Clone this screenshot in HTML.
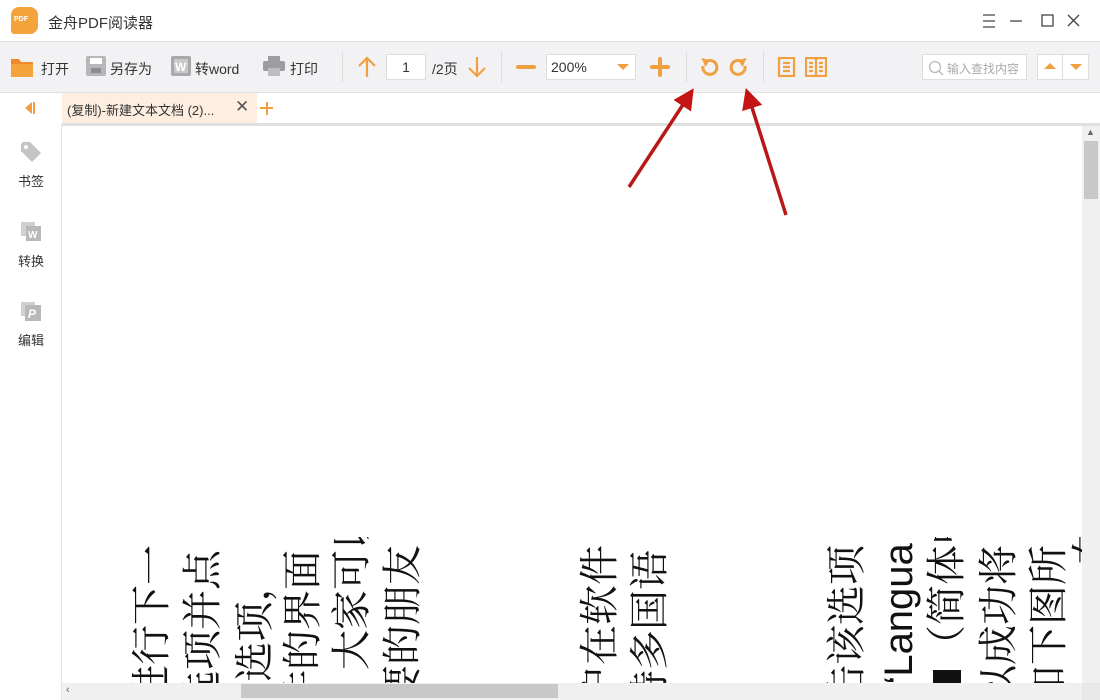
<!DOCTYPE html>
<html><head><meta charset="utf-8"><style>
*{margin:0;padding:0;box-sizing:border-box}
body{width:1100px;height:700px;overflow:hidden;background:#fff;font-family:"Liberation Sans","Noto Sans CJK SC",sans-serif;position:relative;color:#333}
.abs{position:absolute}
#title{left:0;top:0;width:1100px;height:42px;background:#fff;border-bottom:1px solid #e2e2e2}
#tb{left:0;top:42px;width:1100px;height:51px;background:#f2f2f4;border-bottom:1px solid #e0e0e0}
.t{position:absolute;font-size:14px;color:#333;top:17px}
.sep{position:absolute;top:10px;width:1px;height:30px;background:#dcdcdc}
#tabs{left:0;top:93px;width:1100px;height:31px;background:#fff}
#side{left:0;top:124px;width:62px;height:576px;background:#fff;border-right:1px solid #e4e4e4}
.sl{position:absolute;left:0;width:62px;text-align:center;font-size:13px;color:#333}
.col{position:absolute;top:700px;transform-origin:0 0;transform:rotate(-90deg);font-size:40px;line-height:38px;white-space:nowrap;color:#111;font-family:"Liberation Sans","Noto Serif CJK SC",serif}
</style></head><body>
<div id="title" class="abs">
 <div class="abs" style="left:11px;top:7px;width:27px;height:27px;background:#f5a33c;border-radius:8px 8px 8px 3px"></div>
 <div class="abs" style="left:14px;top:16px;font-size:7px;color:#fff;font-weight:bold">PDF</div>
 <div class="abs" style="left:48px;top:12px;font-size:15px;color:#333">金舟PDF阅读器</div>
 <svg class="abs" style="left:978px;top:12px" width="110" height="18" viewBox="0 0 110 18" fill="none" stroke="#444" stroke-width="1.3">
  <path d="M5 3h12M5 9h12M5 15h12"/><path d="M32 9h12"/><rect x="64" y="3" width="11" height="11"/><path d="M90 3l11 11M101 3l-11 11"/></svg>
</div>
<div id="tb" class="abs">
 <svg class="abs" style="left:10px;top:14px" width="24" height="22"><path d="M1 3h8l2 3h12v15H1z" fill="#f08a2c"/><path d="M1 8h22v13H1z" fill="#f5a33c"/></svg>
 <span class="t" style="left:41px">打开</span>
 <svg class="abs" style="left:86px;top:14px" width="20" height="20"><rect x="0" y="0" width="20" height="20" rx="2" fill="#b7b7b9"/><rect x="4" y="2" width="12" height="6" fill="#fff"/><rect x="5" y="12" width="10" height="5" fill="#8d8d8f"/></svg>
 <span class="t" style="left:110px">另存为</span>
 <svg class="abs" style="left:171px;top:14px" width="20" height="20"><rect width="20" height="20" rx="2" fill="#a9a9ab"/><rect x="3" y="3" width="14" height="14" fill="#c9c9cb"/><text x="4" y="15" font-size="12" font-weight="bold" fill="#fff" font-family="Liberation Sans">W</text></svg>
 <span class="t" style="left:195px">转word</span>
 <svg class="abs" style="left:263px;top:14px" width="22" height="20"><rect x="5" y="0" width="12" height="5" fill="#9d9d9f"/><rect x="0" y="5" width="22" height="10" rx="2" fill="#9d9d9f"/><rect x="5" y="12" width="12" height="8" fill="#bdbdbf"/></svg>
 <span class="t" style="left:290px">打印</span>
 <div class="sep" style="left:342px"></div>
 <svg class="abs" style="left:357px;top:14px" width="20" height="22" fill="none" stroke="#f0a040" stroke-width="2.2"><path d="M10 21V2M2 10l8-8 8 8"/></svg>
 <div class="abs" style="left:386px;top:12px;width:40px;height:26px;background:#fff;border:1px solid #ddd;font-size:14px;text-align:center;line-height:24px">1</div>
 <span class="t" style="left:432px">/2页</span>
 <svg class="abs" style="left:467px;top:14px" width="20" height="22" fill="none" stroke="#f0a040" stroke-width="2.2"><path d="M10 1v19M2 12l8 8 8-8"/></svg>
 <div class="sep" style="left:501px"></div>
 <div class="abs" style="left:516px;top:23px;width:20px;height:4px;background:#f0a040;border-radius:2px"></div>
 <div class="abs" style="left:546px;top:12px;width:90px;height:26px;background:#fff;border:1px solid #ddd;font-size:14px;line-height:24px;padding-left:4px">200%</div>
 <div class="abs" style="left:617px;top:22px;border:6px solid transparent;border-top:6px solid #f0a040;border-bottom:0"></div>
 <div class="abs" style="left:650px;top:23px;width:20px;height:4px;background:#f0a040;border-radius:2px"></div>
 <div class="abs" style="left:658px;top:15px;width:4px;height:20px;background:#f0a040;border-radius:2px"></div>
 <div class="sep" style="left:686px"></div>
 <svg class="abs" style="left:699px;top:14px" width="22" height="22" fill="none" stroke="#f0a040" stroke-width="3"><path d="M8 5a7 7 0 1 1-4 5"/><path d="M3 3l6 2-3 5" stroke-width="2" fill="#f0a040"/></svg>
 <svg class="abs" style="left:727px;top:14px" width="22" height="22" fill="none" stroke="#f0a040" stroke-width="3"><path d="M14 5a7 7 0 1 0 4 5"/><path d="M19 3l-6 2 3 5" stroke-width="2" fill="#f0a040"/></svg>
 <div class="sep" style="left:763px"></div>
 <svg class="abs" style="left:777px;top:15px" width="20" height="20" fill="none" stroke="#f0a040" stroke-width="2.2"><rect x="2" y="1" width="15" height="18"/><path d="M6 6h7M6 10h7M6 14h7"/></svg>
 <svg class="abs" style="left:805px;top:15px" width="22" height="20" fill="none" stroke="#f0a040" stroke-width="2.2"><rect x="1" y="1" width="20" height="18"/><path d="M11 1v18M4 6h4M4 10h4M4 14h4M14 6h4M14 10h4M14 14h4"/></svg>
 <div class="abs" style="left:922px;top:12px;width:105px;height:26px;background:#fff;border:1px solid #ddd"></div>
 <svg class="abs" style="left:928px;top:18px" width="16" height="16" fill="none" stroke="#bbb" stroke-width="1.3"><circle cx="7" cy="7" r="5.5"/><path d="M11 11l4 4"/></svg>
 <span class="abs" style="left:947px;top:18px;font-size:12px;color:#aaa">输入查找内容</span>
 <div class="abs" style="left:1037px;top:12px;width:52px;height:26px;background:#fff;border:1px solid #ddd"></div>
 <div class="abs" style="left:1062px;top:12px;width:1px;height:26px;background:#ddd"></div>
 <div class="abs" style="left:1044px;top:21px;border:6px solid transparent;border-bottom:6px solid #f0a040;border-top:0"></div>
 <div class="abs" style="left:1070px;top:22px;border:6px solid transparent;border-top:6px solid #f0a040;border-bottom:0"></div>
</div>
<div id="tabs" class="abs">
 <div class="abs" style="left:25px;top:9px;border:6px solid transparent;border-right:7px solid #f0a040;border-left:0"></div>
 <div class="abs" style="left:33px;top:9px;width:2px;height:12px;background:#f0a040"></div>
 <div class="abs" style="left:62px;top:0;width:195px;height:31px;background:#fdeee0"></div>
 <span class="abs" style="left:67px;top:7px;font-size:13px">(复制)-新建文本文档 (2)...</span>
 <span class="abs" style="left:235px;top:4px;font-size:17px;color:#555">✕</span>
 <div class="abs" style="left:260px;top:14px;width:13px;height:2px;background:#f0a040"></div>
 <div class="abs" style="left:265.5px;top:8.5px;width:2px;height:13px;background:#f0a040"></div>
</div>
<div class="abs" style="left:62px;top:123px;width:1038px;height:3px;background:#e0e0e0"></div>
<div id="side" class="abs">
 <svg class="abs" style="left:20px;top:17px" width="22" height="22"><path d="M1 3v7l11 11 9-9L10 1H3z" fill="#c4c4c6"/><circle cx="6" cy="6" r="2" fill="#fff"/></svg>
 <div class="sl" style="top:47px">书签</div>
 <svg class="abs" style="left:20px;top:97px" width="22" height="22"><rect x="1" y="1" width="14" height="14" fill="#d0d0d2"/><rect x="6" y="5" width="15" height="15" fill="#b8b8ba"/><text x="8" y="17" font-size="10" font-weight="bold" fill="#fff" font-family="Liberation Sans">W</text></svg>
 <div class="sl" style="top:127px">转换</div>
 <svg class="abs" style="left:20px;top:177px" width="22" height="22"><rect x="1" y="1" width="14" height="14" fill="#d0d0d2"/><rect x="5" y="4" width="16" height="16" fill="#b8b8ba"/><text x="8" y="17" font-size="12" font-weight="bold" font-style="italic" fill="#fff" font-family="Liberation Sans">P</text></svg>
 <div class="sl" style="top:206px">编辑</div>
</div>
<div class="abs" style="left:62px;top:537px;width:1020px;height:146px;overflow:hidden">
 <div style="position:absolute;left:-62px;top:-537px;width:1100px;height:700px">
  <div class="col" style="left:133px;top:705px">进行下一</div>
  <div class="col" style="left:184px;top:710px">选项并点</div>
  <div class="col" style="left:236px;top:715px">）”选项，</div>
  <div class="col" style="left:284px;top:710px">件的界面</div>
  <div class="col" style="left:333px;top:670px">大家可以</div>
  <div class="col" style="left:384px;top:705px">要的朋友</div>
  <div class="col" style="left:581px;top:705px">户在软件</div>
  <div class="col" style="left:631px;top:710px">持多国语</div>
  <div class="col" style="left:828px;top:705px">击该选项</div>
  <div class="col" style="left:880px;top:690px;font-family:'Liberation Sans',sans-serif;font-size:40px">“Langua</div>
  <div class="col" style="left:928px;top:665px">（简体中</div>
  <div class="abs" style="left:933px;top:670px;width:28px;height:13px;background:#111"></div>
  <div class="col" style="left:980px;top:705px">以成功将</div>
  <div class="col" style="left:1030px;top:705px">如下图所</div>
  <div class="col" style="left:1073px;top:605px">，在</div>
 </div>
</div>
<div class="abs" style="left:1082px;top:126px;width:18px;height:557px;background:#f0f0f0"></div>
<div class="abs" style="left:1084px;top:141px;width:14px;height:58px;background:#c8c8c8"></div>
<div class="abs" style="left:1086px;top:127px;font-size:9px;color:#666">▲</div>
<div class="abs" style="left:62px;top:683px;width:1038px;height:17px;background:#f0f0f0"></div>
<div class="abs" style="left:241px;top:684px;width:317px;height:14px;background:#c8c8c8"></div>
<div class="abs" style="left:66px;top:684px;font-size:11px;color:#666">‹</div>
<div class="abs" style="left:1082px;top:683px;width:18px;height:17px;background:#e8e8e8"></div>
<svg class="abs" style="left:0;top:0" width="1100" height="700">
 <defs><marker id="a" markerWidth="6" markerHeight="6" refX="3" refY="3" orient="auto"><path d="M0 0L6 3L0 6z" fill="#c41414"/></marker></defs>
 <line x1="629" y1="187" x2="688" y2="97" stroke="#b81818" stroke-width="3.5" marker-end="url(#a)"/>
 <line x1="786" y1="215" x2="749" y2="98" stroke="#b81818" stroke-width="3.5" marker-end="url(#a)"/>
</svg>
</body></html>
